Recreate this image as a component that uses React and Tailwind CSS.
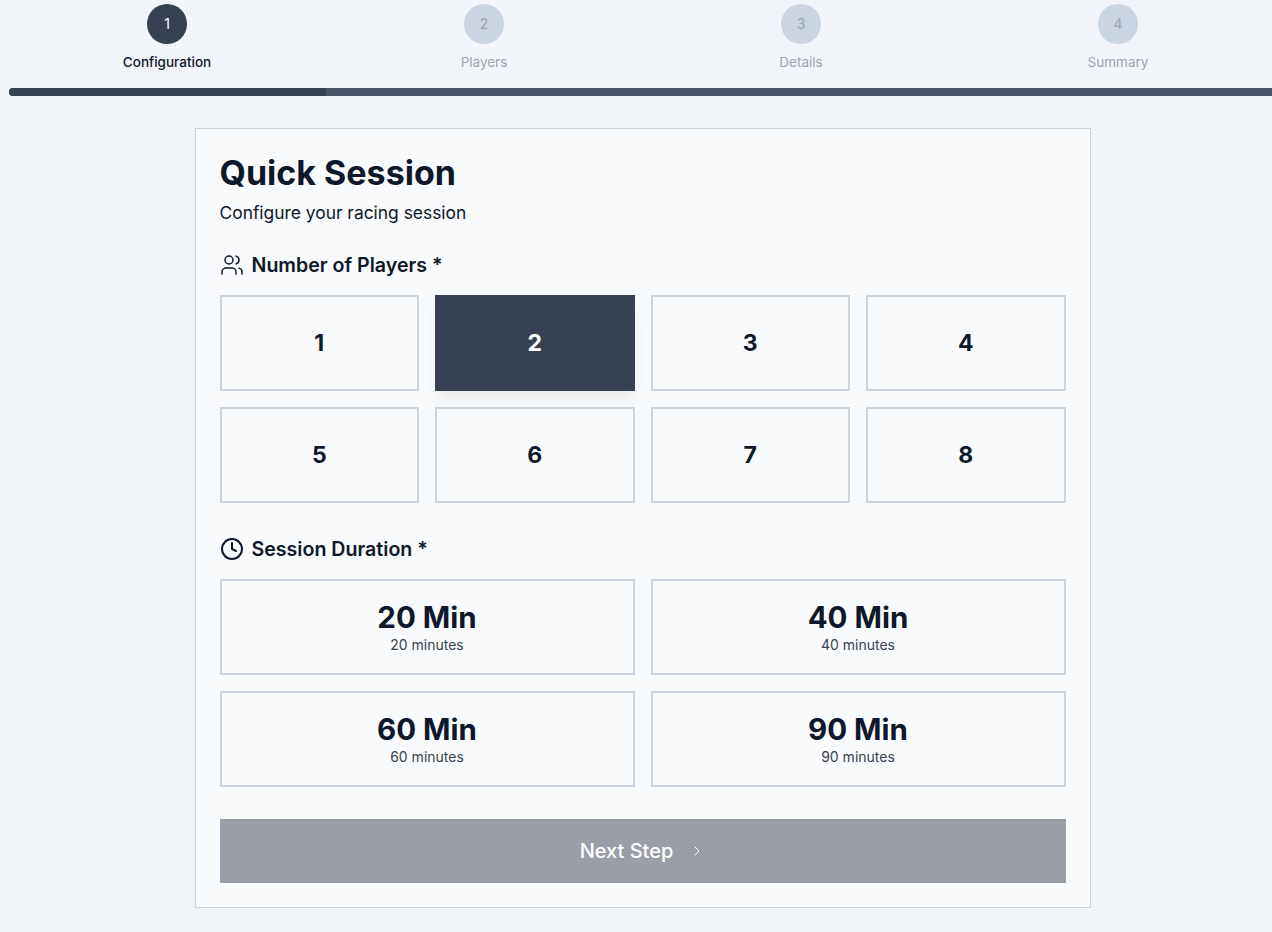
import React from "react";
import { Users, Clock, ChevronRight } from "lucide-react";

const font = "font-['Inter','Liberation_Sans',sans-serif]";

const steps = [
  ["1", "Configuration", true],
  ["2", "Players", false],
  ["3", "Details", false],
  ["4", "Summary", false],
];

function Step({ n, label, active }) {
  return (
    <div className="flex flex-col items-center">
      <div className={active ? "flex h-10 w-10 items-center justify-center rounded-full bg-[#374151] text-sm text-white" : "flex h-10 w-10 items-center justify-center rounded-full bg-[#cbd5e1] text-sm text-[#9ca3af]"}>
        {n}
      </div>
      <div className={active ? "mt-[9px] text-[13.5px] leading-[18px] font-medium text-[#111827]" : "mt-[9px] text-[13.5px] leading-[18px] text-[#9ca3af]"}>
        {label}
      </div>
    </div>
  );
}

function Choice({ label, selected }) {
  return (
    <button className={selected ? "flex h-24 items-center justify-center bg-[#374151] text-[23px] font-bold text-white shadow-[0_10px_15px_-3px_rgba(0,0,0,0.07)]" : "flex h-24 items-center justify-center border-2 border-[#cbd5e1] text-[23px] font-bold text-[#0f172a]"}>
      {label}
    </button>
  );
}

function Duration({ label, sub }) {
  return (
    <button className="flex h-24 flex-col items-center justify-center border-2 border-[#cbd5e1] pt-[2px] text-[#0f172a]">
      <span className="text-[29.5px] leading-8 font-bold">{label}</span>
      <span className="mt-[2px] text-[14px] leading-5 text-[#374151]">{sub}</span>
    </button>
  );
}

export default function App() {
  return (
    <div className={`${font} h-[932px] w-[1272px] overflow-hidden bg-[#f1f5f9] pt-1 pl-[8.5px]`}>
      <div className="w-[1268px]">
        <div className="grid grid-cols-4">
          {steps.map(([n, label, active]) => (
            <Step key={n} n={n} label={label} active={active} />
          ))}
        </div>
        <div className="mt-[17px] flex h-2 overflow-hidden rounded-full bg-[#4b5568]">
          <div className="w-1/4 bg-[#374151]" />
        </div>
        <div className="mx-auto mt-8 h-[780px] w-[896px] border border-[#cbd5e1] bg-[#f8fafc] px-6 pt-6">
          <h1 className="text-[34px] leading-10 font-bold text-[#0f172a]">Quick Session</h1>
          <p className="mt-2 text-[17.4px] leading-6 text-[#0f172a]">Configure your racing session</p>
          <div className="mt-[26px] flex h-7 items-center gap-2 text-[19.6px] font-semibold text-[#0f172a]">
            <Users size={24} strokeWidth={1.5} />
            <span className="pt-[2px]">Number of Players *</span>
          </div>
          <div className="mt-4 grid grid-cols-4 gap-4">
            {[1, 2, 3, 4, 5, 6, 7, 8].map((n) => (
              <Choice key={n} label={n} selected={n === 2} />
            ))}
          </div>
          <div className="mt-8 flex h-7 items-center gap-2 text-[19.6px] font-semibold text-[#0f172a]">
            <Clock size={24} strokeWidth={2} />
            <span className="pt-[2px]">Session Duration *</span>
          </div>
          <div className="mt-4 grid grid-cols-2 gap-4">
            {[20, 40, 60, 90].map((n) => (
              <Duration key={n} label={`${n} Min`} sub={`${n} minutes`} />
            ))}
          </div>
          <button className="mt-8 flex h-16 w-full items-center justify-center gap-4 bg-[#9a9ea7] text-xl font-medium text-white">
            <span>Next Step</span>
            <ChevronRight size={16} strokeWidth={1.5} />
          </button>
        </div>
      </div>
    </div>
  );
}
